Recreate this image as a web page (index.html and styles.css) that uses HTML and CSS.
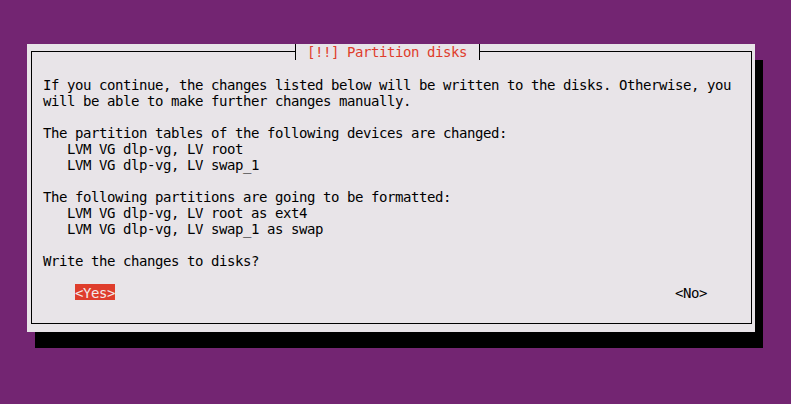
FILE: index.html
```html
<!DOCTYPE html>
<html lang="en">
<head>
<meta charset="utf-8">
<title>[!!] Partition disks</title>
<link rel="stylesheet" href="styles.css">
</head>
<body>
<div class="screen">
  <div class="dialog">
    <div class="title">[!!] Partition disks</div>
    <div class="frame">
      <div class="content">
        <p class="para">If you continue, the changes listed below will be written to the disks. Otherwise, you
will be able to make further changes manually.</p>
        <p class="para">The partition tables of the following devices are changed:
   LVM VG dlp-vg, LV root
   LVM VG dlp-vg, LV swap_1</p>
        <p class="para">The following partitions are going to be formatted:
   LVM VG dlp-vg, LV root as ext4
   LVM VG dlp-vg, LV swap_1 as swap</p>
        <p class="para">Write the changes to disks?</p>
        <div class="buttons">
          <span class="btn btn-active">&lt;Yes&gt;</span>
          <span class="btn">&lt;No&gt;</span>
        </div>
      </div>
    </div>
  </div>
</div>
</body>
</html>
```
FILE: styles.css
```css
html, body {
  margin: 0;
  padding: 0;
}
body {
  background: #732572;
  width: 791px;
  height: 404px;
  overflow: hidden;
  font-family: "DejaVu Sans Mono", "Liberation Mono", monospace;
  font-size: 14px;
  letter-spacing: -0.4287px;
  line-height: 16px;
  color: #000;
}
.screen {
  padding: 44px 0 0 27px;
}
.dialog {
  position: relative;
  box-sizing: border-box;
  width: 728px;
  height: 288px;
  padding: 7px 0 0 4px;
  background: #e8e4e8;
  box-shadow: 8px 16px 0 0 #000;
}
.frame {
  box-sizing: border-box;
  width: 721px;
  height: 273px;
  border: 1px solid #000;
}
.title {
  position: absolute;
  top: 0;
  left: 268px;
  height: 16px;
  padding: 0 12px 0 11px;
  border-left: 1px solid #000;
  border-right: 1px solid #000;
  background: #e8e4e8;
  color: #df3d2c;
  white-space: pre;
}
.content {
  padding: 24px 0 0 11px;
}
.para {
  margin: 0 0 15px 0;
  padding-top: 1px;
  white-space: pre;
}
.buttons {
  display: flex;
  justify-content: space-between;
  padding: 0 44px 0 32px;
}
.btn {
  display: block;
  height: 16px;
  padding-top: 1px;
  box-sizing: border-box;
  white-space: pre;
}
.btn-active {
  width: 40px;
  background: #df3d2c;
  color: #f3eaea;
}
```
